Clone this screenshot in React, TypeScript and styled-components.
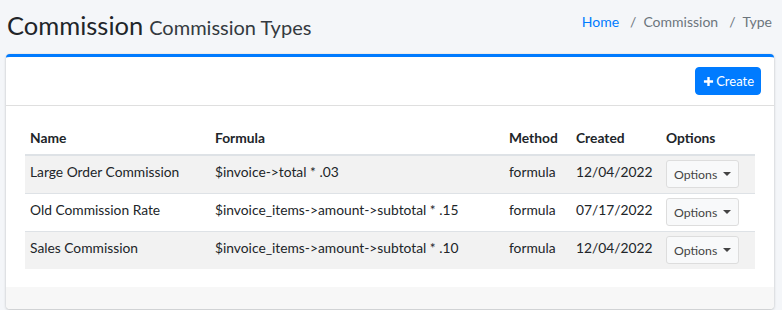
import React from 'react';
import styled, { createGlobalStyle } from 'styled-components';

const GlobalStyle = createGlobalStyle`
    html, body {
        margin: 0;
        padding: 0;
        background: #f4f6f9;
    }
    body {
        font-family: Lato, 'Noto Sans', sans-serif;
        color: #212529;
        font-size: 13.8px;
    }
`;

const Page = styled.div`
    width: 782px;
    height: 310px;
    padding: 0 8px 0 6px;
    box-sizing: border-box;
`;

const Header = styled.div`
    display: flex;
    align-items: flex-start;
    justify-content: space-between;
    padding: 8px 2px 0 1px;
    height: 46px;
    box-sizing: border-box;
`;

const Title = styled.h1`
    margin: 0;
    font-size: 25.5px;
    line-height: 34px;
    font-weight: 400;
    color: #212529;
    small {
        font-size: 20px;
        margin-left: 6px;
        color: #343a40;
    }
`;

const Breadcrumb = styled.ol`
    display: flex;
    list-style: none;
    margin: 4px 0 0;
    padding: 0;
    font-size: 14px;
    line-height: 20px;
    color: #6c757d;
`;

const Crumb = styled.li<{ $link?: boolean }>`
    color: ${({ $link }) => ($link ? '#007bff' : '#6c757d')};
    &:not(:first-child)::before {
        content: '/';
        color: #6c757d;
        padding: 0 7px 0 11px;
    }
`;

const Card = styled.div`
    margin-top: 8px;
    background: #fff;
    border-top: 3px solid #007bff;
    border-radius: 4px;
    box-shadow: 0 0 1px rgba(0, 0, 0, 0.125), 0 1px 3px rgba(0, 0, 0, 0.2);
    overflow: hidden;
`;

const CardHeader = styled.div`
    display: flex;
    justify-content: flex-end;
    padding: 10px 13px 10px 20px;
    border-bottom: 1px solid rgba(0, 0, 0, 0.125);
`;

const CreateButton = styled.button`
    display: flex;
    align-items: center;
    gap: 2px;
    height: 28px;
    padding: 0 6px 0 7px;
    background: #007bff;
    border: 1px solid #007bff;
    border-radius: 4px;
    color: #fff;
    font-family: inherit;
    font-size: 13px;
`;

const CardBody = styled.div`
    padding: 17px 19px 18px 19px;
`;

const Table = styled.table`
    width: 100%;
    border-collapse: collapse;
    table-layout: fixed;
    th {
        text-align: left;
        font-weight: 700;
        padding: 4px 5px 5px;
        border-bottom: 2px solid #dee2e6;
        line-height: 22px;
    }
    td {
        vertical-align: top;
        padding: 5px 5px;
        line-height: 22px;
        border-top: 1px solid #dee2e6;
        white-space: nowrap;
    }
    tbody tr:nth-child(odd) {
        background: #f2f2f2;
    }
    tbody tr:first-child td {
        border-top: none;
    }
`;

const OptionsButton = styled.button`
    display: flex;
    align-items: center;
    gap: 6px;
    height: 28px;
    padding: 0 7px;
    margin-top: -1px;
    background: #f8f9fa;
    border: 1px solid #ddd;
    border-radius: 3px;
    color: #444;
    font-family: inherit;
    font-size: 12.3px;
    &::after {
        content: '';
        border-top: 4.5px solid #444;
        border-left: 4.5px solid transparent;
        border-right: 4.5px solid transparent;
    }
`;

const CardFooter = styled.div`
    height: 22px;
    background: #f7f7f7;
`;

const rows = [
    { name: 'Large Order Commission', formula: '$invoice->total * .03', method: 'formula', created: '12/04/2022' },
    { name: 'Old Commission Rate', formula: '$invoice_items->amount->subtotal * .15', method: 'formula', created: '07/17/2022' },
    { name: 'Sales Commission', formula: '$invoice_items->amount->subtotal * .10', method: 'formula', created: '12/04/2022' },
];

function PlusIcon() {
    return (
        <svg width="11" height="11" viewBox="0 0 12 12">
            <path d="M6 1v10M1 6h10" stroke="#fff" strokeWidth="2.6" />
        </svg>
    );
}

export default function App() {
    return (
        <>
            <GlobalStyle />
            <Page>
                <Header>
                    <Title>
                        Commission<small>Commission Types</small>
                    </Title>
                    <Breadcrumb>
                        <Crumb $link>Home</Crumb>
                        <Crumb>Commission</Crumb>
                        <Crumb>Type</Crumb>
                    </Breadcrumb>
                </Header>
                <Card>
                    <CardHeader>
                        <CreateButton>
                            <PlusIcon />
                            Create
                        </CreateButton>
                    </CardHeader>
                    <CardBody>
                        <Table>
                            <colgroup>
                                <col style={{ width: 185 }} />
                                <col style={{ width: 294 }} />
                                <col style={{ width: 67 }} />
                                <col style={{ width: 90 }} />
                                <col />
                            </colgroup>
                            <thead>
                                <tr>
                                    <th>Name</th>
                                    <th>Formula</th>
                                    <th>Method</th>
                                    <th>Created</th>
                                    <th>Options</th>
                                </tr>
                            </thead>
                            <tbody>
                                {rows.map((r) => (
                                    <tr key={r.name}>
                                        <td>{r.name}</td>
                                        <td>{r.formula}</td>
                                        <td>{r.method}</td>
                                        <td>{r.created}</td>
                                        <td>
                                            <OptionsButton>Options</OptionsButton>
                                        </td>
                                    </tr>
                                ))}
                            </tbody>
                        </Table>
                    </CardBody>
                    <CardFooter />
                </Card>
            </Page>
        </>
    );
}
